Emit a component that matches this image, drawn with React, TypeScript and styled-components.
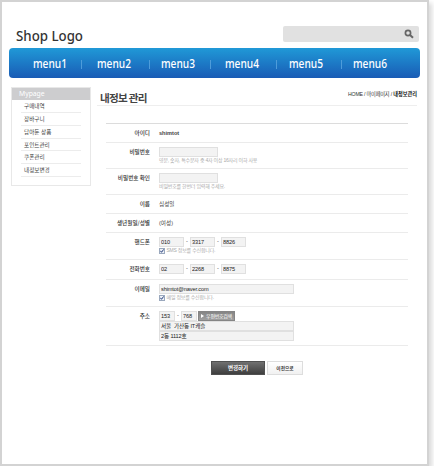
import React from "react";
import styled, { createGlobalStyle } from "styled-components";

const Global = createGlobalStyle`
  * { box-sizing: border-box; }
  body { margin: 0; background: #fff; overflow: hidden; }
  input, button { font: inherit; letter-spacing: inherit; margin: 0; }
`;

const Page = styled.div`
  width: 429px;
  height: 466px;
  border: 2px solid #d3d3d3;
  background: #fff;
  box-shadow: 3px 3px 5px rgba(0, 0, 0, 0.15);
  padding: 24px 7px 0 7px;
  font-family: "Liberation Sans", "Noto Sans CJK KR", sans-serif;
  font-size: 5.6px;
  color: #444;
`;
const Header = styled.header`
  display: flex;
  justify-content: space-between;
  height: 22px;
  padding: 0 1px 0 7px;
`;
const Logo = styled.h1`
  margin: -2px 0 0;
  font: 500 14.6px/22px "Noto Sans", sans-serif;
  transform: scaleX(0.91);
  transform-origin: left;
  color: #333;
  white-space: nowrap;
`;
const Search = styled.div`
  width: 136px;
  height: 16px;
  border-radius: 2px;
  background: #e1e1e1;
  display: flex;
  align-items: center;
  justify-content: flex-end;
  padding-right: 5px;
`;
const Nav = styled.nav`
  height: 30px;
  width: 411px;
  border-radius: 4px;
  background: linear-gradient(#2099d7, #195bb5);
  display: grid;
  grid-template-columns: 73px 68px 61px 66px 65px 78px;
  align-items: center;
  padding-top: 2px;
`;
const MenuItem = styled.a<{ $pad: number }>`
  height: 9px;
  padding-left: ${(p) => p.$pad}px;
  border-right: 1px solid #4e9cda;
  font: 500 11.8px/7px "Noto Sans", sans-serif;
  color: #fff;
  white-space: nowrap;
  &:last-child { border-right: 0; }
`;
const MenuText = styled.span`
  display: inline-block;
  transform: scaleX(0.86);
  transform-origin: left;
`;
const Body = styled.div`
  display: flex;
  padding: 9px 0 0 2px;
`;
const Sidebar = styled.aside`
  width: 80px;
  height: 99px;
  border: 1px solid #e8e8e8;
`;
const SideTitle = styled.h2`
  margin: 0;
  height: 12px;
  padding-left: 7px;
  background: #cdcdcf;
  color: #fff;
  font: 400 6.8px/12px "Noto Sans", sans-serif;
  letter-spacing: 0;
`;
const SideList = styled.ul`
  list-style: none;
  margin: 0 9px;
  padding: 0;
`;
const SideItem = styled.li`
  height: 12.85px;
  padding-left: 3px;
  border-bottom: 1px solid #ececec;
  line-height: 12px;
  color: #444;
  white-space: nowrap;
`;
const Main = styled.main`
  width: 320px;
  margin-left: 6px;
`;
const TitleBar = styled.div`
  height: 19px;
  border-bottom: 1px solid #eeeeee;
  display: flex;
  justify-content: space-between;
  padding-left: 3px;
`;
const Title = styled.h2`
  margin: 0;
  font: 700 10.6px/21px "Noto Sans CJK KR", sans-serif;
  letter-spacing: -0.75px;
  color: #444;
`;
const Crumbs = styled.div`
  line-height: 15px;
  font-size: 5.2px;
  letter-spacing: -0.2px;
  color: #333;
  white-space: nowrap;
  b { color: #111; letter-spacing: 0; }
`;
const Form = styled.form`
  width: 302px;
  margin: 17px 0 0 9px;
  border-top: 1px solid #dcdcdc;
`;
const Row = styled.div<{ $h: number }>`
  height: ${(p) => p.$h}px;
  border-bottom: 1px solid #ebebeb;
  display: grid;
  grid-template-columns: 44px 1fr;
  column-gap: 9px;
  padding-top: 4px;
`;
const Label = styled.label`
  text-align: right;
  line-height: 11px;
  font-weight: 500;
  font-family: "Noto Sans CJK KR", sans-serif;
  color: #333;
  white-space: nowrap;
`;
const Value = styled.div`
  line-height: 11px;
  white-space: nowrap;
`;
const Line = styled.div`
  display: flex;
  height: 10px;
`;
const Field = styled.input<{ $w: number }>`
  display: block;
  width: ${(p) => p.$w}px;
  height: 10px;
  padding: 0 0 0 1px;
  border: 1px solid #e0e0e0;
  border-radius: 0;
  background: #f3f3f3;
  color: #222;
  line-height: 8px;
  letter-spacing: -0.12px;
  outline: 0;
`;
const Dash = styled.span`
  width: 6px;
  text-align: center;
  line-height: 9px;
`;
const Hint = styled.div`
  display: flex;
  align-items: center;
  gap: 1.5px;
  height: 7px;
  font-size: 5px;
  line-height: 7px;
  letter-spacing: -0.22px;
  color: #aaa;
`;
const Check = styled.span`
  width: 6px;
  height: 6px;
  border: 1px solid #9aa8bd;
  background: #eef1f7;
  display: flex;
`;
const ZipButton = styled.button`
  width: 37px;
  height: 10px;
  margin-left: 1px;
  padding: 0;
  border: 1px solid #858585;
  background: linear-gradient(#858585, #a0a0a0);
  color: #fff;
  font-size: 5px;
  line-height: 8px;
  letter-spacing: -0.3px;
  display: flex;
  align-items: center;
  justify-content: center;
  gap: 2px;
`;
const Actions = styled.div`
  display: flex;
  gap: 2px;
  margin: 15px 0 0 114px;
`;
const Action = styled.button<{ $primary?: boolean }>`
  width: ${(p) => (p.$primary ? 54 : 36)}px;
  height: 14px;
  padding: 0;
  border: 1px solid ${(p) => (p.$primary ? "#505050" : "#dddddd")};
  background: ${(p) => (p.$primary ? "linear-gradient(#707070, #3e3e3e)" : "linear-gradient(#fff, #f1f1f1)")};
  color: ${(p) => (p.$primary ? "#fff" : "#333")};
  font-size: ${(p) => (p.$primary ? 5.5 : 4.7)}px;
  font-weight: 700;
  line-height: 11px;
`;

const Tick = () => (
  <svg width="4" height="4" viewBox="0 0 4 4">
    <path d="M0.4 1.8L1.5 3.3L3.7 0.4" fill="none" stroke="#27407c" strokeWidth="1" />
  </svg>
);

const Phone = ({ parts }: { parts: string[] }) => (
  <Line>
    {parts.map((p, i) => (
      <React.Fragment key={p}>
        {i > 0 && <Dash>-</Dash>}
        <Field $w={25} defaultValue={p} />
      </React.Fragment>
    ))}
  </Line>
);

const menus = [24, 15, 11, 14, 12, 11];
const links = ["구매내역", "장바구니", "담아둔 상품", "포인트관리", "쿠폰관리", "내정보변경"];

export default function App() {
  return (
    <Page>
      <Global />
      <Header>
        <Logo>Shop Logo</Logo>
        <Search>
          <svg width="10" height="10" viewBox="0 0 10 10" fill="none" stroke="#666">
            <circle cx="4" cy="4" r="2.6" strokeWidth="1.7" />
            <path d="M6 6L9 8.8" strokeWidth="2" />
          </svg>
        </Search>
      </Header>
      <Nav>
        {menus.map((pad, i) => (
          <MenuItem key={i} $pad={pad}>
            <MenuText>{`menu${i + 1}`}</MenuText>
          </MenuItem>
        ))}
      </Nav>
      <Body>
        <Sidebar>
          <SideTitle>Mypage</SideTitle>
          <SideList>
            {links.map((l) => (
              <SideItem key={l}>{l}</SideItem>
            ))}
          </SideList>
        </Sidebar>
        <Main>
          <TitleBar>
            <Title>내정보 관리</Title>
            <Crumbs>HOME / 마이페이지 / <b>내정보관리</b></Crumbs>
          </TitleBar>
          <Form onSubmit={(e) => e.preventDefault()}>
            <Row $h={19}>
              <Label>아이디</Label>
              <Value><b>shimtot</b></Value>
            </Row>
            <Row $h={26}>
              <Label>비밀번호</Label>
              <Value>
                <Field $w={59} />
                <Hint>영문, 숫자, 특수문자 중 4자 이상 16자리 이하 사용</Hint>
              </Value>
            </Row>
            <Row $h={26}>
              <Label>비밀번호 확인</Label>
              <Value>
                <Field $w={59} />
                <Hint>비밀번호를 한번더 입력해 주세요.</Hint>
              </Value>
            </Row>
            <Row $h={19}>
              <Label>이름</Label>
              <Value>심성일</Value>
            </Row>
            <Row $h={19}>
              <Label>생년월일/성별</Label>
              <Value>(여성)</Value>
            </Row>
            <Row $h={27}>
              <Label>핸드폰</Label>
              <Value>
                <Phone parts={["010", "3317", "8826"]} />
                <Hint><Check><Tick /></Check>SMS 정보를 수신합니다.</Hint>
              </Value>
            </Row>
            <Row $h={20}>
              <Label>전화번호</Label>
              <Value><Phone parts={["02", "2268", "8875"]} /></Value>
            </Row>
            <Row $h={27}>
              <Label>이메일</Label>
              <Value>
                <Field $w={135} defaultValue="shimtot@naver.com" />
                <Hint><Check><Tick /></Check>메일 정보를 수신합니다.</Hint>
              </Value>
            </Row>
            <Row $h={39}>
              <Label>주소</Label>
              <Value>
                <Line>
                  <Field $w={16} defaultValue="153" />
                  <Dash>-</Dash>
                  <Field $w={16} defaultValue="768" />
                  <ZipButton type="button">
                    <svg width="3" height="4" viewBox="0 0 3 4"><path d="M0 0L3 2L0 4Z" fill="#fff" /></svg>
                    우편번호검색
                  </ZipButton>
                </Line>
                <Field $w={135} defaultValue="서울  가산동 IT캐슬" />
                <Field $w={135} defaultValue="2동 1112호" />
              </Value>
            </Row>
          </Form>
          <Actions>
            <Action $primary>변경하기</Action>
            <Action>이전으로</Action>
          </Actions>
        </Main>
      </Body>
    </Page>
  );
}
